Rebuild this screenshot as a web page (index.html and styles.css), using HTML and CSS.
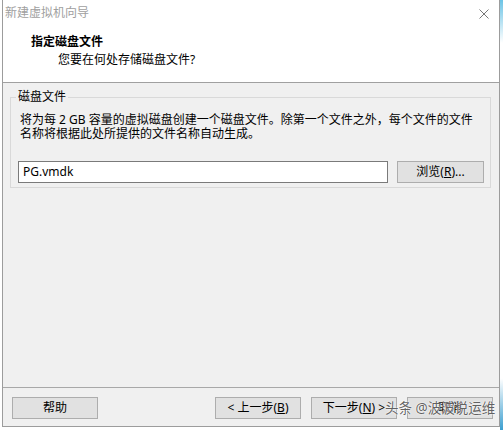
FILE: index.html
```html
<!DOCTYPE html>
<html lang="zh-CN">
<head>
    <meta charset="UTF-8">
    <title>新建虚拟机向导</title>
    <link rel="stylesheet" href="styles.css">
</head>
<body>
    <div class="window">
        <div class="titlebar">
            <span class="title">新建虚拟机向导</span>
            <svg class="close" width="10" height="10" viewBox="0 0 10 10">
                <path d="M0.5 0.5 L9.5 9.5 M9.5 0.5 L0.5 9.5" stroke="#777" stroke-width="1" fill="none"/>
            </svg>
        </div>
        <div class="header">
            <div class="header-title">指定磁盘文件</div>
            <div class="header-sub">您要在何处存储磁盘文件?</div>
        </div>

        <div class="content">
            <fieldset class="group">
                <legend>磁盘文件</legend>
                <p class="desc">将为每 2 GB 容量的虚拟磁盘创建一个磁盘文件。除第一个文件之外，每个文件的文件<br>名称将根据此处所提供的文件名称自动生成。</p>
                <div class="file-row">
                    <div class="file-input">PG.vmdk</div>
                    <div class="btn btn-browse">浏览(<u>R</u>)...</div>
                </div>
            </fieldset>
        </div>

        <div class="footer">
            <div class="btn">帮助</div>
            <div class="footer-right">
                <div class="btn">&lt; 上一步(<u>B</u>)</div>
                <div class="btn">下一步(<u>N</u>) &gt;</div>
                <div class="btn">取消</div>
            </div>
            <span class="watermark">头条 @波波说运维</span>
        </div>
    </div>
</body>
</html>
```

FILE: styles.css
```css
html, body {
    margin: 0;
    padding: 0;
}
body {
    width: 503px;
    height: 430px;
    overflow: hidden;
    font-family: "Noto Sans", "Noto Sans CJK SC", sans-serif;
    font-size: 12px;
    color: #000;
    background: linear-gradient(#6cc4e6, #ffffff 10%, #ffffff 88%, #3c9fd0) right top / 3px 100% no-repeat, #fff;
}
.window {
    box-sizing: border-box;
    width: 498px;
    height: 427px;
    margin-left: 2px;
    border: 1px solid #9c9c9c;
    border-top: none;
    background-color: #f0f0f0;
    display: flex;
    flex-direction: column;
}
.titlebar {
    height: 26px;
    background-color: #fff;
    display: flex;
    align-items: center;
    justify-content: space-between;
    padding: 0 10px 0 2px;
}
.title {
    color: #a0a0a0;
    line-height: 26px;
}
.close {
    margin-top: 1px;
}
.header {
    background-color: #fff;
    padding: 7px 0 13px 28px;
    border-bottom: 1px solid #a0a0a0;
}
.header-title {
    font-weight: bold;
    line-height: 18px;
}
.header-sub {
    line-height: 18px;
    padding-left: 27px;
}
.content {
    flex: 1;
    padding: 6px 7px 0 7px;
}
.group {
    margin: 0;
    padding: 8px 6px 4px 9px;
    border: 1px solid #d9d9d9;
    width: 478px;
    box-sizing: border-box;
}
.group legend {
    padding: 0 2px;
    margin-left: -4px;
    line-height: 16px;
}
.desc {
    margin: 0;
    line-height: 14px;
    white-space: nowrap;
}
.file-row {
    display: flex;
    gap: 9px;
    margin-top: 20px;
    margin-left: -2px;
}
.file-input {
    box-sizing: border-box;
    width: 370px;
    height: 22px;
    border: 1px solid #7a7a7a;
    background-color: #fff;
    padding-left: 4px;
    line-height: 20px;
}
.btn {
    box-sizing: border-box;
    width: 86px;
    height: 22px;
    border: 1px solid #adadad;
    background-color: #e1e1e1;
    text-align: center;
    line-height: 20px;
}
.btn u {
    text-underline-offset: 1px;
}
.btn-browse {
    width: 87px;
}
.footer {
    position: relative;
    border-top: 1px solid #a8a8a8;
    height: 39px;
    box-sizing: border-box;
    padding: 9px 6px 0 9px;
    display: flex;
    justify-content: space-between;
}
.footer-right {
    display: flex;
    gap: 10px;
}
.watermark {
    position: absolute;
    left: 382px;
    top: 12px;
    font-size: 13.5px;
    line-height: 17px;
    color: rgba(70, 70, 70, 0.85);
    text-shadow: 0 0 2px #fff, 0 0 1px #fff;
    white-space: nowrap;
}
```
